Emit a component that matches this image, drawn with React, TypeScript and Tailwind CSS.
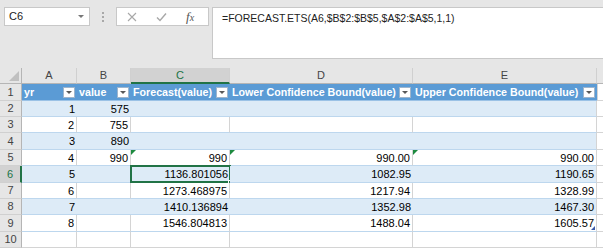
import React from "react";

const F = "font-['Liberation_Sans',Arial,sans-serif]";

type Row = {
  n: number;
  h: string;
  a?: string;
  b?: string;
  c?: string;
  d?: string;
  e?: string;
  band?: boolean;
  tri?: boolean;
  sel?: boolean;
  handle?: boolean;
};

const rows: Row[] = [
  { n: 2, h: "h-[16px]", a: "1", b: "575", band: true },
  { n: 3, h: "h-[16px]", a: "2", b: "755" },
  { n: 4, h: "h-[17px]", a: "3", b: "890", band: true },
  { n: 5, h: "h-[16px]", a: "4", b: "990", c: "990", d: "990.00", e: "990.00", tri: true },
  { n: 6, h: "h-[17px]", a: "5", c: "1136.801056", d: "1082.95", e: "1190.65", band: true, sel: true },
  { n: 7, h: "h-[16px]", a: "6", c: "1273.468975", d: "1217.94", e: "1328.99" },
  { n: 8, h: "h-[16px]", a: "7", c: "1410.136894", d: "1352.98", e: "1467.30", band: true },
  { n: 9, h: "h-[17px]", a: "8", c: "1546.804813", d: "1488.04", e: "1605.57", handle: true },
];

const widths = ["w-[55px]", "w-[54px]", "w-[99px]", "w-[183px]", "w-[184px]"];

function Tri() {
  return (
    <span className="absolute left-0 top-0 w-0 h-0 border-t-[5px] border-t-[#1d8a3f] border-r-[5px] border-r-transparent" />
  );
}

function Filter() {
  return (
    <span className="ml-auto mr-[2px] w-[12px] h-[11px] bg-white border border-[#9fb5cc] flex items-center justify-center shrink-0">
      <span className="w-0 h-0 border-l-[3px] border-r-[3px] border-t-[3px] border-l-transparent border-r-transparent border-t-[#595959]" />
    </span>
  );
}

function RowHeader({ n, h, sel }: { n: number; h: string; sel?: boolean }) {
  return (
    <div
      className={`${h} w-[22px] shrink-0 flex items-center justify-center text-[11px] border-b border-b-[#d0d0d0] ${
        sel
          ? "bg-[#d2d2d2] text-[#217346] border-r-2 border-r-[#217346]"
          : "bg-[#e6e6e6] text-[#444] border-r border-r-[#b5b5b5]"
      }`}
    >
      {n}
    </div>
  );
}

export default function App() {
  return (
    <div className={`w-[603px] h-[248px] overflow-hidden bg-[#e6e6e6] ${F} text-black`}>
      {/* formula bar area */}
      <div className="h-[68px] flex items-start pt-[7px]">
        <div className="ml-[4px] w-[86px] h-[19px] bg-white border border-[#c8c8c8] flex items-center pl-[4px] pr-[5px] text-[11px] text-[#222]">
          <span>C6</span>
          <span className="ml-auto w-0 h-0 border-l-[3px] border-r-[3px] border-t-[3px] border-l-transparent border-r-transparent border-t-[#777]" />
        </div>
        <div className="ml-[11px] w-[4px] h-[19px] flex flex-col items-center justify-center gap-[2px]">
          <span className="w-[2px] h-[2px] bg-[#a8a8a8]" />
          <span className="w-[2px] h-[2px] bg-[#a8a8a8]" />
          <span className="w-[2px] h-[2px] bg-[#a8a8a8]" />
        </div>
        <div className="ml-[11px] w-[93px] h-[19px] bg-white border border-[#c8c8c8] flex items-center">
          <svg width="10" height="10" viewBox="0 0 10 10" className="ml-[10px]">
            <path d="M1 1 L9 9 M9 1 L1 9" stroke="#a8a8a8" strokeWidth="1.1" fill="none" />
          </svg>
          <svg width="11" height="10" viewBox="0 0 11 10" className="ml-[19px]">
            <path d="M1 5.5 L4 8.5 L10 1.5" stroke="#a8a8a8" strokeWidth="1.4" fill="none" />
          </svg>
          <span className="ml-[19px] font-['Liberation_Serif',serif] italic text-[13px] text-[#555] leading-none">
            f<span className="text-[10px]">x</span>
          </span>
        </div>
        <div className="ml-[3px] flex-1 h-[52px] bg-white border border-r-0 border-[#c8c8c8] pl-[9px] pt-[3px] text-[10.5px] leading-[14px] text-[#222]">
          =FORECAST.ETS(A6,$B$2:$B$5,$A$2:$A$5,1,1)
        </div>
      </div>

      {/* column headers */}
      <div className="h-[16px] flex text-[11px] text-[#444]">
        <div className="w-[22px] shrink-0 relative border-r border-r-[#b5b5b5] border-b border-b-[#b5b5b5] bg-[#e6e6e6]">
          <span className="absolute right-[2px] bottom-[2px] w-0 h-0 border-l-[10px] border-l-transparent border-b-[10px] border-b-[#c0c0c0]" />
        </div>
        {["A", "B", "C", "D", "E"].map((l, i) => (
          <div
            key={l}
            className={`${widths[i]} shrink-0 flex items-center justify-center border-r border-r-[#d0d0d0] ${
              l === "C"
                ? "bg-[#d2d2d2] text-[#217346] border-b-2 border-b-[#217346]"
                : "bg-[#e6e6e6] border-b border-b-[#b5b5b5]"
            }`}
          >
            {l}
          </div>
        ))}
        <div className="flex-1 bg-[#e6e6e6] border-b border-b-[#b5b5b5]" />
      </div>

      {/* row 1: table header */}
      <div className="flex h-[17px] text-[11px]">
        <RowHeader n={1} h="h-[17px]" />
        {["yr", "value", "Forecast(value)", "Lower Confidence Bound(value)", "Upper Confidence Bound(value)"].map(
          (t, i) => (
            <div
              key={t}
              className={`${widths[i]} shrink-0 h-[17px] bg-[#5b9bd5] text-white font-bold text-[10.7px] flex items-center pl-[2px] border-b border-b-[#9bc2e6]`}
            >
              <span className="whitespace-nowrap">{t}</span>
              <Filter />
            </div>
          )
        )}
        <div className="flex-1 bg-white border-b border-l border-[#d4d4d4]" />
      </div>

      {/* data rows */}
      {rows.map((r) => {
        const bg = r.band ? "bg-[#ddebf7]" : "bg-white";
        const cell = `shrink-0 relative flex items-center justify-end pr-[2px] pt-[1px] border-b border-b-[#bdd7ee] ${bg}`;
        const vline = r.band ? "" : "border-r border-r-[#d4d4d4]";
        return (
          <div key={r.n} className={`flex ${r.h} text-[11px]`}>
            <RowHeader n={r.n} h={r.h} sel={r.sel} />
            <div className={`${widths[0]} ${cell} ${vline}`}>{r.a}</div>
            <div className={`${widths[1]} ${cell} ${vline}`}>{r.b}</div>
            <div className={`${widths[2]} ${cell} ${vline}`}>
              {r.tri && <Tri />}
              {r.c}
              {r.sel && (
                <>
                  <span className="absolute inset-[-1px] border-2 border-[#217346] pointer-events-none" />
                  <span className="absolute right-[-3px] bottom-[-3px] w-[5px] h-[5px] bg-[#217346] border border-white" />
                </>
              )}
            </div>
            <div className={`${widths[3]} ${cell} ${vline}`}>
              {r.tri && <Tri />}
              {r.d}
            </div>
            <div className={`${widths[4]} ${cell} border-r border-r-[#d4d4d4]`}>
              {r.tri && <Tri />}
              {r.e}
              {r.handle && (
                <span className="absolute right-[1px] bottom-[1px] w-0 h-0 border-l-[4px] border-l-transparent border-b-[4px] border-b-[#3b5ba9]" />
              )}
            </div>
            <div className="flex-1 bg-white border-b border-b-[#d4d4d4]" />
          </div>
        );
      })}

      {/* row 10 */}
      <div className="flex h-[16px] text-[11px]">
        <RowHeader n={10} h="h-[16px]" />
        {widths.map((w, i) => (
          <div key={i} className={`${w} shrink-0 bg-white border-r border-b border-[#d4d4d4]`} />
        ))}
        <div className="flex-1 bg-white border-b border-[#d4d4d4]" />
      </div>
    </div>
  );
}
